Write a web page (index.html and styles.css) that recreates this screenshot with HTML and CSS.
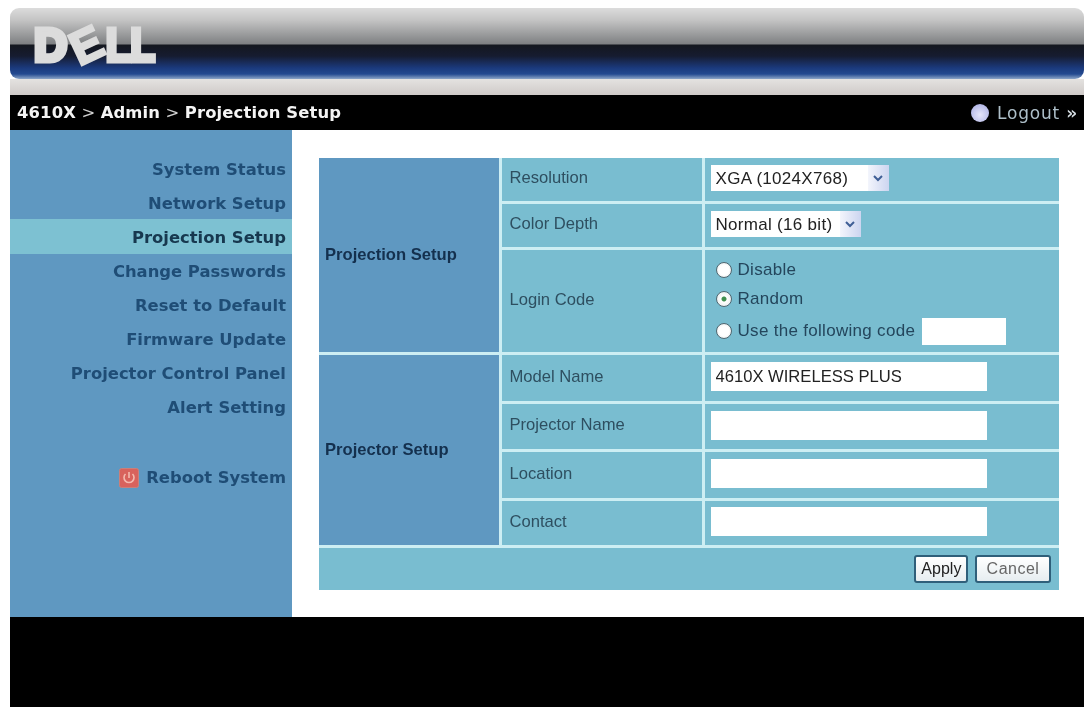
FILE: index.html
```html
<!DOCTYPE html>
<html lang="en">
<head>
    <meta charset="UTF-8">
    <title>4610X - Projection Setup</title>
    <link rel="stylesheet" href="styles.css">
</head>
<body>
    <div class="page">
        <div class="banner">
            <div class="logo"><span>D</span><span class="logo-e">E</span><span class="logo-l">LL</span></div>
        </div>
        <div class="band"></div>

        <div class="crumbs">
            <div class="crumb-path"><b>4610X</b> &gt; <b>Admin</b> &gt; <b>Projection Setup</b></div>
            <a class="logout" href="#"><span class="logout-dot"></span>Logout <b>»</b></a>
        </div>

        <div class="content">
            <div class="side">
                <a class="nav-item" href="#">System Status</a>
                <a class="nav-item" href="#">Network Setup</a>
                <a class="nav-item active" href="#">Projection Setup</a>
                <a class="nav-item" href="#">Change Passwords</a>
                <a class="nav-item" href="#">Reset to Default</a>
                <a class="nav-item" href="#">Firmware Update</a>
                <a class="nav-item" href="#">Projector Control Panel</a>
                <a class="nav-item" href="#">Alert Setting</a>
                <a class="nav-item reboot" href="#">
                    <svg class="reboot-icon" viewBox="0 0 20 20">
                        <rect x="0.5" y="0.5" width="19" height="19" rx="2" fill="#d8625c" stroke="#c9807a"/>
                        <path d="M6.5 6 A5 5 0 1 0 13.5 6 M10 4 V10" fill="none" stroke="#f3b9ae" stroke-width="1.6"/>
                    </svg>
                    Reboot System
                </a>
            </div>

            <div class="main">
                <form>
                    <table class="setup">
                        <colgroup>
                            <col class="col-group">
                            <col class="col-label">
                            <col>
                        </colgroup>
                        <tr class="row-res">
                            <th rowspan="3">Projection Setup</th>
                            <td class="label">Resolution</td>
                            <td>
                                <div class="select select-res">
                                    <select><option>XGA (1024X768)</option></select>
                                    <span class="arrow"><svg viewBox="0 0 10 8"><path d="M1 2 L5 6 L9 2" fill="none" stroke="#3f5f96" stroke-width="2"/></svg></span>
                                </div>
                            </td>
                        </tr>
                        <tr class="row-depth">
                            <td class="label">Color Depth</td>
                            <td>
                                <div class="select select-depth">
                                    <select><option>Normal (16 bit)</option></select>
                                    <span class="arrow"><svg viewBox="0 0 10 8"><path d="M1 2 L5 6 L9 2" fill="none" stroke="#3f5f96" stroke-width="2"/></svg></span>
                                </div>
                            </td>
                        </tr>
                        <tr class="row-login">
                            <td class="label">Login Code</td>
                            <td>
                                <label class="radio"><input type="radio" name="code">Disable</label>
                                <label class="radio"><input type="radio" name="code" checked>Random</label>
                                <label class="radio radio-code"><input type="radio" name="code">Use the following code <input type="text" class="code-input"></label>
                            </td>
                        </tr>
                        <tr class="row-model">
                            <th rowspan="4">Projector Setup</th>
                            <td class="label">Model Name</td>
                            <td><input type="text" class="text-input" value="4610X WIRELESS PLUS"></td>
                        </tr>
                        <tr class="row-name">
                            <td class="label">Projector Name</td>
                            <td><input type="text" class="text-input"></td>
                        </tr>
                        <tr class="row-location">
                            <td class="label">Location</td>
                            <td><input type="text" class="text-input"></td>
                        </tr>
                        <tr class="row-contact">
                            <td class="label">Contact</td>
                            <td><input type="text" class="text-input"></td>
                        </tr>
                        <tr class="row-actions">
                            <td colspan="3" class="actions">
                                <button type="button" class="btn btn-apply">Apply</button>
                                <button type="button" class="btn btn-cancel">Cancel</button>
                            </td>
                        </tr>
                    </table>
                </form>
            </div>
        </div>

        <div class="footer"></div>
    </div>
</body>
</html>
```

FILE: styles.css
```css
body {
    margin: 0;
    background-color: #fff;
    font-family: "Liberation Sans", Arial, sans-serif;
    overflow: hidden;
}
.page {
    width: 1074px;
    height: 699px;
    margin: 8px 0 0 10px;
    display: flex;
    flex-direction: column;
    filter: blur(0.5px); /* the source is a soft, scanned-looking capture */
}

/* Banner */
.banner {
    height: 71px;
    box-sizing: border-box;
    padding: 19px 0 0 24px;
    border-radius: 9px;
    background: linear-gradient(#dcdcdc 0, #c4c4c4 12px, #7e8082 36px, #14171f 37px, #161c30 48px, #1b3a7d 60px, #234a90 66px, #8da6c8 71px);
}
.logo {
    display: flex;
    height: 36px;
    font-size: 46px;
    line-height: 36px;
    font-weight: bold;
    color: #dcdcdc;
    -webkit-text-stroke: 5px #dcdcdc;
}
.logo-e {
    display: inline-block;
    margin: 0 4px;
    transform: rotate(-25deg);
    -webkit-text-stroke: 3px #dcdcdc;
}
.logo-l {
    transform: scaleX(0.87);
    transform-origin: left;
}
.band {
    height: 16px;
    background: linear-gradient(#e4e2e0, #cfcac8);
}

/* Breadcrumb bar */
.crumbs {
    height: 35px;
    background-color: #000;
    display: flex;
    align-items: center;
    justify-content: space-between;
    padding: 0 6px 0 7px;
    font-family: "DejaVu Sans", sans-serif;
    font-size: 16.4px;
    letter-spacing: 0.15px;
    color: #cfcfcf;
}
.crumb-path b {
    color: #f4f4f4;
}
.logout {
    display: flex;
    align-items: center;
    color: #aebfc9;
    text-decoration: none;
    font-size: 17px;
    letter-spacing: 0.8px;
    white-space: pre;
}
.logout b {
    color: #d5dde2;
}
.logout-dot {
    width: 18px;
    height: 18px;
    margin-right: 8px;
    border-radius: 50%;
    background: radial-gradient(circle at 50% 60%, #e6e6fa, #a3a8e0);
}

/* Side menu */
.content {
    height: 487px;
    display: flex;
}
.side {
    width: 282px;
    box-sizing: border-box;
    padding-top: 22px;
    background-color: #5f98c1;
}
.nav-item {
    display: flex;
    align-items: center;
    justify-content: flex-end;
    height: 34px;
    box-sizing: border-box;
    padding: 1px 6px 0 0;
    font-family: "DejaVu Sans", sans-serif;
    font-size: 16.4px;
    font-weight: bold;
    color: #1f4d76;
    text-decoration: none;
}
.nav-item.active {
    height: 35px;
    margin-top: -1px;
    background-color: #7dc1d2;
    color: #17384f;
}
.reboot {
    margin-top: 36px;
}
.reboot-icon {
    width: 20px;
    height: 20px;
    margin-right: 7px;
}

/* Settings table */
.main {
    flex: 1;
    padding: 28px 0 0 27px;
}
.setup {
    width: 740px;
    table-layout: fixed;
    border-collapse: collapse;
    border-style: hidden;
    font-size: 16.6px;
}
.setup th, .setup td {
    border: 3px solid #cdeef3;
    padding: 0 0 0 6px;
    background-color: #79bdd0;
    color: #2e4f60;
    font-weight: normal;
    text-align: left;
}
.setup th {
    background-color: #5f98c1;
    color: #14304e;
    font-weight: bold;
}
.setup .label {
    padding: 0 0 2px 8px;
}
.col-group {
    width: 181px;
}
.col-label {
    width: 203px;
}
.row-res { height: 44px; }
.row-depth { height: 46px; }
.row-login { height: 105px; }
.row-model { height: 49px; }
.row-name { height: 48px; }
.row-location { height: 49px; }
.row-contact { height: 47px; }
.row-actions { height: 44px; }

.select {
    display: flex;
    height: 26px;
    margin-bottom: 2px;
    background-color: #fff;
}
.select-res {
    width: 178px;
}
.select-depth {
    width: 150px;
}
.select select {
    flex: 1;
    min-width: 0;
    appearance: none;
    border: none;
    background: transparent;
    padding: 0 0 0 5px;
    font-family: inherit;
    font-size: 17px;
    letter-spacing: 0.3px;
    color: #222;
}
.arrow {
    width: 21px;
    display: flex;
    align-items: center;
    justify-content: center;
    background: linear-gradient(90deg, #f3f5fc, #ccd5f0);
}
.arrow svg {
    width: 10px;
    height: 8px;
}

.radio {
    display: flex;
    align-items: center;
    height: 29px;
    padding-left: 5px;
    font-size: 17px;
    letter-spacing: 0.3px;
    color: #24465c;
}
.radio-code {
    margin-top: 3px;
}
.radio input[type="radio"] {
    appearance: none;
    width: 16px;
    height: 16px;
    margin: 0 6px 0 0;
    border: 1px solid #4d6670;
    border-radius: 50%;
    background: radial-gradient(circle, #fff 50%, #d9dedf);
}
.radio input[type="radio"]:checked {
    background: radial-gradient(circle, #3f8f4f 0, #3f8f4f 2px, #fff 3px, #dfe5e5);
}
.code-input {
    width: 84px;
    height: 27px;
    box-sizing: border-box;
    margin-left: 7px;
    border: none;
    background-color: #fff;
}
.text-input {
    display: block;
    width: 276px;
    height: 29px;
    margin-bottom: 2px;
    box-sizing: border-box;
    padding: 0 5px;
    border: none;
    background-color: #fff;
    font-family: inherit;
    font-size: 16.6px;
    color: #222;
}

.actions {
    text-align: right !important;
    padding-right: 8px !important;
}
.btn {
    height: 28px;
    box-sizing: border-box;
    padding: 0;
    border: 2px solid #2f5f7a;
    border-radius: 3px;
    background: linear-gradient(#fff, #e6edf0);
    font-family: inherit;
    font-size: 16px;
    color: #222;
}
.btn-apply {
    width: 54px;
    margin-right: 2px;
}
.btn-cancel {
    width: 76px;
    color: #666;
    letter-spacing: 0.5px;
}

.footer {
    flex: 1;
    background-color: #000;
}
```
